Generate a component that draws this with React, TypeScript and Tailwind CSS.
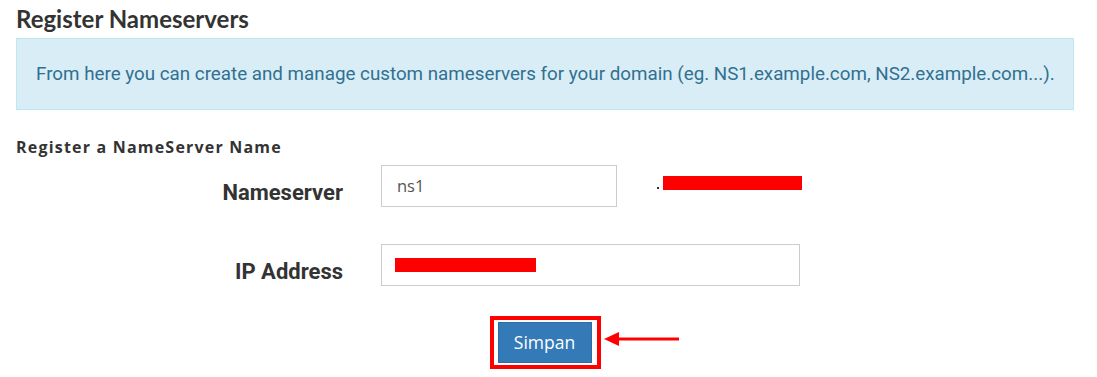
export default function App() {
  return (
    <div className="w-[1097px] h-[377px] bg-white overflow-hidden">
      <div className="pl-4 pr-[23px] pt-[4px]">
        <h2 className="text-[24px] font-bold text-[#333] leading-[30px] font-['Lato',sans-serif]">Register Nameservers</h2>
        <div className="mt-[4px] h-[72px] border border-[#bce8f1] bg-[#d9edf7] flex items-center pl-[19px]">
          <p className="text-[18.8px] text-[#31708f] font-['Roboto',sans-serif]">
            From here you can create and manage custom nameservers for your domain (eg. NS1.example.com, NS2.example.com...).
          </p>
        </div>
        <h3 className="mt-[27px] text-[16px] font-bold text-[#333] leading-[20px] tracking-[1.2px] font-['Open_Sans',sans-serif]">Register a NameServer Name</h3>
        <div className="mt-[8px] flex items-start">
          <label className="w-[327px] pt-[13px] text-right text-[22px] leading-[30px] font-bold text-[#333] font-['Roboto',sans-serif]">Nameserver</label>
          <div className="ml-[38px] w-[236px] h-[42px] border border-[#ccc] flex items-center pl-[15px] text-[16.5px] text-[#555] font-['Open_Sans',sans-serif]">ns1</div>
          <div className="ml-[40px] mt-[11px] flex items-center">
            <span className="w-[2px] h-[2px] bg-[#333] mr-[4px] mt-[10px]"></span>
            <span className="w-[139px] h-[14px] bg-[#ff0000]"></span>
          </div>
        </div>
        <div className="mt-[36px] flex items-start">
          <label className="w-[327px] pt-[13px] text-right text-[22px] leading-[30px] font-bold text-[#333] font-['Roboto',sans-serif]">IP Address</label>
          <div className="ml-[38px] w-[419px] h-[42px] border border-[#ccc] flex items-center pl-[13px]">
            <span className="w-[141px] h-[14px] bg-[#ff0000]"></span>
          </div>
        </div>
        <div className="mt-[29px] flex justify-center items-center relative">
          <div className="border-4 border-[#ff0000] pl-[4px] pr-[5px] pt-[2px] pb-[2px]">
            <button className="w-[94px] h-[41px] bg-[#337ab7] border border-[#2e6da4] text-white text-[17.5px] font-['Open_Sans',sans-serif]">Simpan</button>
          </div>
          <svg className="absolute left-[588px] top-[16px]" width="76" height="14" viewBox="0 0 76 14">
            <line x1="12" y1="7" x2="75" y2="7" stroke="#ff0000" strokeWidth="3" />
            <polygon points="0,7 15,0 15,14" fill="#ff0000" />
          </svg>
        </div>
      </div>
    </div>
  );
}
